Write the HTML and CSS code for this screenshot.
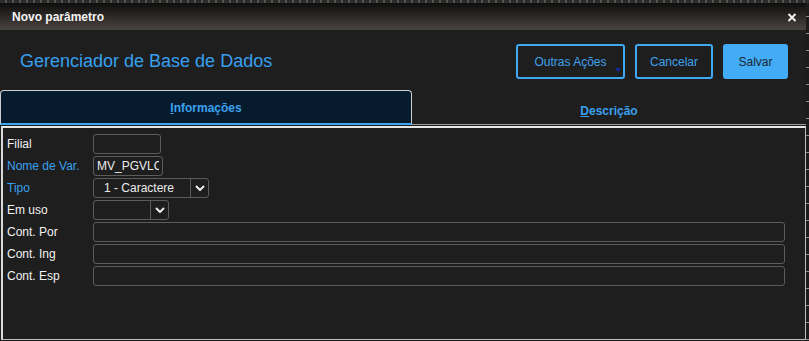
FILE: index.html
```html
<!DOCTYPE html>
<html lang="pt">

<head>
    <meta charset="utf-8">
    <meta name="viewport" content="width=device-width, initial-scale=1">
    <title>Novo parâmetro</title>
    <link rel="stylesheet" href="styles.css">
</head>

<body>
    <!-- strip of the page behind the dialog -->
    <div class="screen-top"></div>

    <div class="dialog">
        <div class="titlebar">
            <span class="title">Novo parâmetro</span>
            <button class="close" title="Fechar">
                <svg width="10" height="9" viewBox="0 0 10 9">
                    <path d="M1.5 1 L8.5 8 M8.5 1 L1.5 8" stroke="#f2f2f2" stroke-width="2" fill="none" />
                </svg>
            </button>
        </div>

        <div class="header">
            <h1>Gerenciador de Base de Dados</h1>
            <div class="actions">
                <button class="btn btn-more">Outras Ações<span class="caret"></span></button>
                <button class="btn btn-cancel">Cancelar</button>
                <button class="btn btn-save">Salvar</button>
            </div>
        </div>

        <div class="tabs">
            <div class="tab active"><span><u>I</u>nformações</span></div>
            <div class="tab"><span><u>D</u>escrição</span></div>
        </div>

        <div class="panel">
            <div class="form">
                <label>Filial</label>
                <input class="field w-filial" type="text">

                <label class="req">Nome de Var.</label>
                <input class="field w-var" type="text" value="MV_PGVLOJA">

                <label class="req">Tipo</label>
                <div class="select w-tipo">
                    <select>
                        <option>1 - Caractere</option>
                        <option>2 - Numérico</option>
                        <option>3 - Lógico</option>
                    </select>
                    <span class="arrow">
                        <svg width="10" height="6" viewBox="0 0 10 6"><path d="M1 1 L5 5 L9 1" stroke="#eee" stroke-width="2" fill="none" /></svg>
                    </span>
                </div>

                <label>Em uso</label>
                <div class="select w-uso">
                    <select>
                        <option></option>
                        <option>Sim</option>
                        <option>Não</option>
                    </select>
                    <span class="arrow">
                        <svg width="10" height="6" viewBox="0 0 10 6"><path d="M1 1 L5 5 L9 1" stroke="#eee" stroke-width="2" fill="none" /></svg>
                    </span>
                </div>

                <label>Cont. Por</label>
                <input class="field w-cont" type="text">

                <label>Cont. Ing</label>
                <input class="field w-cont" type="text">

                <label>Cont. Esp</label>
                <input class="field w-cont" type="text">
            </div>
        </div>
    </div>
</body>

</html>
```

FILE: styles.css
```css
body {
    margin: 0;
    height: 341px;
    overflow: hidden;
    font-family: "Liberation Sans", Arial, sans-serif;
    /* page behind the dialog, with its row separators */
    background: repeating-linear-gradient(to bottom, #1c1c1c 0, #1c1c1c 16px, #8c8c8c 16px, #8c8c8c 17px);
}

.screen-top {
    height: 3px;
    background: repeating-linear-gradient(to right, #2b2b2b 0, #2b2b2b 5px, #55504a 5px, #55504a 7px);
}

.dialog {
    width: 806px;
    background-color: #1e1e1e;
}

/* Title bar */
.titlebar {
    height: 27px;
    display: flex;
    align-items: center;
    justify-content: space-between;
    padding: 0 9px 0 12px;
    background: linear-gradient(to bottom, #0e0e0e, #4a443f);
}

.title {
    color: #f4f4f4;
    font-size: 12px;
    font-weight: bold;
}

.close {
    border: 0;
    padding: 0;
    background: none;
    display: flex;
    margin-top: 1px;
}

/* Header with actions */
.header {
    display: flex;
    align-items: center;
    justify-content: space-between;
    padding: 14px 18px 11px 20px;
}

.header h1 {
    margin: 0;
    font-size: 18px;
    font-weight: normal;
    color: #36a0f0;
}

.actions {
    display: flex;
    gap: 10px;
}

.btn {
    position: relative;
    height: 35px;
    box-sizing: border-box;
    border: 2px solid #3ea8f2;
    border-radius: 3px;
    background: transparent;
    color: #3ea2ef;
    font-family: "Liberation Sans", Arial, sans-serif;
    font-size: 12px;
    padding: 0;
}

.btn-more {
    width: 109px;
}

.btn-cancel {
    width: 78px;
}

.btn-save {
    width: 65px;
    background-color: #42adf6;
    border-color: #42adf6;
    color: #1c2530;
}

.caret {
    position: absolute;
    right: 2px;
    bottom: 5px;
    border-left: 3.5px solid transparent;
    border-right: 3.5px solid transparent;
    border-top: 4px solid #1428a0;
}

/* Tabs */
.tabs {
    display: flex;
    height: 35px;
}

.tab {
    flex: 1;
    display: flex;
    justify-content: center;
    align-items: center;
    box-sizing: border-box;
    padding-top: 8px;
    border-bottom: 1px solid #9b9b9b;
    color: #3aa0f0;
    font-size: 12px;
    font-weight: bold;
}

.tab.active {
    flex: 0 0 412px;
    padding-top: 1px;
    background-color: #061c2e;
    border: 1px solid #cfcfcf;
    border-bottom: 2px solid #3aa6f0;
    border-radius: 4px 4px 0 0;
}

/* Panel with the form */
.panel {
    margin: 1px 0 0 1px;
    height: 214px;
    box-sizing: border-box;
    border: 1px solid #bdbdbd;
    border-top: 2px solid #e8e8e8;
    border-left: 2px solid #d8d8d8;
    padding: 6px 0 0 4px;
}

.form {
    display: grid;
    grid-template-columns: 86px 1fr;
    grid-auto-rows: 20px;
    row-gap: 2px;
    align-items: center;
}

.form label {
    color: #f2f2f2;
    font-size: 12px;
}

.form label.req {
    color: #3aa0f0;
}

.field {
    height: 20px;
    box-sizing: border-box;
    border: 1px solid #5c5c5c;
    border-radius: 3px;
    background: transparent;
    color: #ececec;
    font-family: "Liberation Sans", Arial, sans-serif;
    font-size: 12px;
    padding: 0 3px;
    outline: none;
}

.select {
    display: flex;
    height: 20px;
    box-sizing: border-box;
    border: 1px solid #5c5c5c;
    border-radius: 3px;
}

.select select {
    flex: 1;
    min-width: 0;
    appearance: none;
    border: 0;
    background: transparent;
    color: #ececec;
    font-family: "Liberation Sans", Arial, sans-serif;
    font-size: 12px;
    padding: 0 0 0 10px;
    outline: none;
}

.select option {
    background-color: #1e1e1e;
}

.arrow {
    width: 17px;
    border-left: 1px solid #5c5c5c;
    display: flex;
    align-items: center;
    justify-content: center;
}

.w-filial { width: 68px; }
.w-var { width: 70px; }
.w-tipo { width: 116px; }
.w-uso { width: 76px; }
.w-cont { width: 692px; }
```
